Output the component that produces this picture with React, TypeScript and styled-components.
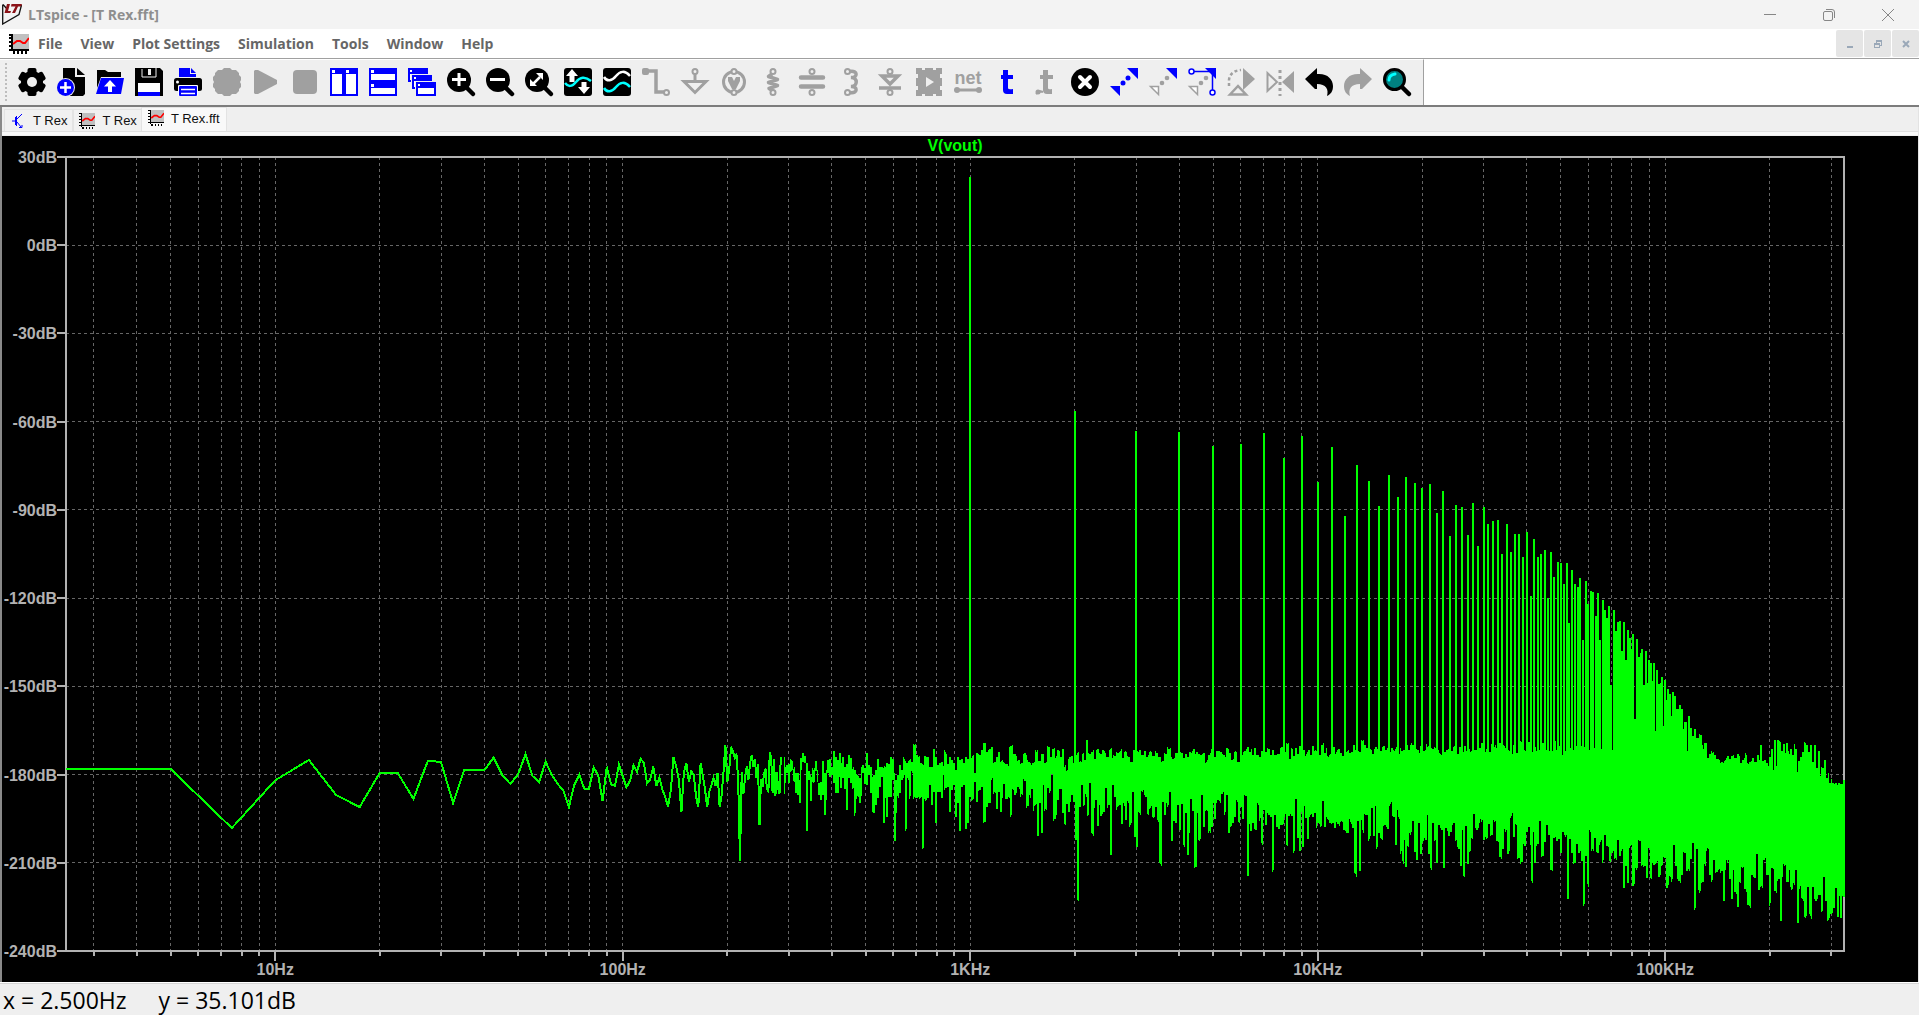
import React, { ReactNode } from "react";
import styled, { createGlobalStyle } from "styled-components";

const uiFont = `"Open Sans", "Noto Sans", sans-serif`;
const plotFont = `"Liberation Sans", Arial, sans-serif`;

const Global = createGlobalStyle`
  * { box-sizing: border-box; }
  html, body { margin: 0; }
  body { background: #efefef; font-family: ${uiFont}; }
  button { border: 0; padding: 0; margin: 0; background: none; font: inherit; color: inherit; }
`;

const Window = styled.div`
  display: flex;
  flex-direction: column;
  height: 100vh;
  min-height: 480px;
  overflow: hidden;
`;

const TitleBar = styled.header`
  display: flex;
  align-items: center;
  height: 29px;
  flex: none;
  padding: 0 21px 0 2px;
  background: #f3f3f3;
  color: #8e8e8e;
`;

const Title = styled.h1`
  flex: 1;
  margin: 0 0 0 6px;
  font-size: 14px;
  font-weight: 700;
  line-height: 28px;
`;

const CaptionButtons = styled.div`
  display: flex;
  gap: 39px;
`;

const CaptionButton = styled.button`
  display: flex;
  width: 20px;
  height: 20px;
  align-items: center;
  justify-content: center;
  color: #868686;
`;

const MenuBar = styled.nav`
  display: flex;
  align-items: center;
  height: 30px;
  flex: none;
  padding: 0 0 0 9px;
  background: #ffffff;
  border-bottom: 1px solid #a0a0a0;
  color: #666666;
`;

const Menus = styled.div`
  display: flex;
  flex: 1;
  gap: 18px;
  margin-left: 9px;
`;

const MenuButton = styled.button`
  font-size: 14px;
  font-weight: 700;
  line-height: 28px;
`;

const ChildButtons = styled.div`
  display: flex;
  gap: 1px;
`;

const ChildButton = styled.button`
  display: flex;
  width: 27px;
  height: 27px;
  align-items: center;
  justify-content: center;
  border-radius: 2px;
  background: #e5e5e5;
  color: #9aa8b8;
`;

const ToolStrip = styled.div`
  display: flex;
  height: 48px;
  flex: none;
  background: #ffffff;
  border-bottom: 2px solid #7c7c7c;
`;

const Tools = styled.div`
  display: flex;
  align-items: center;
  gap: 11px;
  padding: 0 12px 1px 5px;
  background: #efefef;
  border-top: 1px solid #ffffff;
  border-right: 1px solid #a0a0a0;
`;

const Grip = styled.span`
  width: 2px;
  height: 38px;
  background: repeating-linear-gradient(#bdbdbd 0 2px, transparent 2px 4px);
`;

const ToolButton = styled.button`
  display: block;
  width: 28px;
  height: 28px;
  color: #000000;
  &:disabled { color: #a0a0a0; }
  svg { display: block; overflow: visible; }
  text {
    font-family: ${plotFont};
    font-size: 18px;
    font-weight: 700;
  }
`;

const Document = styled.main`
  display: flex;
  flex: 1;
  min-height: 0;
  flex-direction: column;
  border-left: 2px solid #8a8a8a;
  border-right: 1px solid #e3e3e3;
`;

const Tabs = styled.div`
  display: flex;
  align-items: flex-end;
  height: 25px;
  flex: none;
  padding-left: 2px;
  border-bottom: 1px solid #dfdfdf;
`;

const Tab = styled.button<{ $active?: boolean }>`
  display: flex;
  align-items: center;
  gap: 7px;
  height: ${(p) => (p.$active ? 24 : 22)}px;
  margin-left: ${(p) => (p.$active ? -2 : 0)}px;
  padding: ${(p) => (p.$active ? "0 6px 3px 6px" : "0 5px")};
  border: 1px solid #e3e3e3;
  border-bottom: 0;
  background: ${(p) => (p.$active ? "#f9f9f9" : "#f1f1f1")};
  color: #101010;
  font-family: ${plotFont};
  font-size: 13px;
`;

const TabEdge = styled.div`
  height: 4px;
  flex: none;
  background: #f9f9f9;
  border-bottom: 1px solid #efefef;
`;

const PlotPane = styled.section`
  display: flex;
  flex: 1;
  min-height: 0;
  padding: 21px 74px 31px 64px;
  background: #000000;
`;

const PlotSvg = styled.svg`
  display: block;
  width: 100%;
  height: 100%;
  overflow: visible;
  text {
    font-family: ${plotFont};
    font-size: 16px;
    font-weight: 700;
    fill: #b2b2b2;
  }
  text.trace { fill: #00ff00; }
`;

const StatusBar = styled.footer`
  display: flex;
  gap: 32px;
  height: 33px;
  flex: none;
  padding: 1px 0 0 3px;
  background: #efefef;
  border-top: 1px solid #ffffff;
  box-shadow: inset 0 1px 0 #d5d5d5;
  color: #000000;
  font-size: 23px;
  line-height: 33px;
  white-space: pre;
`;

/* ---------- spectrum data ---------- */

const F_MIN = 2.5;
const DECADES = 5.1165;
const DB_TOP = 30;
const DB_SPAN = 270;
const W = 1778;
const H = 794;

const fx = (f: number) => Math.log10(f / F_MIN) / DECADES;
const dy = (db: number) => (DB_TOP - db) / DB_SPAN;

/* first 114 bins, 2.5 Hz apart, in thirds of a raster line below line 563 */
const lowBins = [
  147, 147, 324, 181, 120, 226, 261, 158, 158, 237, 122, 126, 249, 150, 150, 150, 113, 165, 192, 163,
  103, 168, 186, 125, 165, 192, 212, 261, 195, 164, 206, 206, 143, 166, 243, 140, 193, 198, 134, 168,
  202, 182, 135, 156, 116, 128, 190, 178, 140, 198, 172, 208, 230, 260, 212, 112, 140, 178, 277, 156,
  130, 186, 154, 164, 228, 262, 130, 168, 208, 262, 215, 196, 174, 198, 158, 260, 226, 156, 74, 186,
  150, 80, 94, 114, 104, 180, 424, 156, 222, 170, 138, 180, 130, 106, 140, 116, 174, 132, 316, 176,
  202, 160, 146, 208, 214, 96, 116, 218, 116, 228, 156, 204, 222, 110,
];

/* envelope samples as x,top,bottom: 280 Hz - 1 kHz */
const midBand =
  "730,110,222 736,142,190 740,134,160 745,132,188 750,118,155 756,122,150 762,140,185 767,158,220 773,160,225 778,180,250 781,115,150 787,100,125 793,108,130 799,128,334 805,152,180 813,170,244 819,150,190 826,122,152 831,150,185 836,190,225 841,186,240 847,122,225 853,160,284 858,150,240 862,120,160 868,116,170 874,142,165 880,92,190 886,112,218 892,120,220 897,100,170 903,128,205 908,110,175 914,140,208 920,132,270 926,104,175 933,115,190 939,140,205 945,150,280 951,165,228 958,175,250 963,142,228 968,134,160 973,145,192 980,100,196 986,135,165 991,142,218 1000,165,280 1006,150,255 1013,116,235 1019,140,200 1024,140,170 1029,145,310 1035,140,235 1040,128,292 1046,132,230 1051,110,230 1057,118,180 1062,160,364 1068,180,278 1074,165,235 1079,134,220 1086,150,180 1092,116,165 1098,128,326 1104,124,180 1110,118,228 1116,125,160 1122,74,230 1130,105,235 1137,108,238 1143,130,230 1149,135,385 1155,108,244 1162,110,235 1168,140,195 1174,140,256 1180,88,215 1186,110,308 1192,135,215 1198,128,215 1204,125,235 1209,138,165 1215,95,205 1222,132,200 1228,110,275 1235,120,210 1240,130,195 1246,150,292 1252,110,250 1258,120,334 1264,118,200 1270,130,195 1276,110,328 1283,118,308 1290,120,205 1296,108,240 1304,160,185 1310,100,246 1318,105,210 1325,90,200 1333,70,306 1340,95,262 1348,88,250 1356,80,175 1362,125,215 1370,112,268 1376,95,215";

/* noise ceiling and floor, 1 kHz - 20 kHz */
const ceilA =
  "0,1085 20,1092 33,1038 42,1062 55,1080 65,1090 73,1060 85,1085 97,1090 108,1055 117,1082 127,1062 135,1088 144,1040 152,1070 158,1047 168,1068 173,1050 182,1070 189,1046 195,1095 201,1110 207,1072 215,1068 220,1090 228,1065 234,1056 240,1082 249,1060 255,1080 261,1020 267,1062 276,1056 284,1076 291,1047 300,1062 312,1053 320,1072 330,1048 342,1068 352,1060 360,1052 367,1075 375,1054 385,1072 395,1085 403,1050 418,1050 427,1065 433,1054 440,1070 450,1053 458,1068 468,1058 475,1070 488,1084 495,1062 505,1047 518,1076 527,1058 545,1060 550,1075 557,1063 563,1072 570,1056 580,1048 590,1056 600,1066 610,1060 618,1085 625,1066 636,1050 642,1070 652,1054 662,1056 670,1066 681,1045 690,1060 696,1080 705,1054 715,1085 722,1068 733,1054 741,1042 748,1056 754,1048 758,1066 763,1045 770,1066 778,1070 785,1052 796,1056 806,1048 812,1064 818,1050 826,1066 836,1062 843,1042 850,1056 861,1032 869,1076 876,1047 881,1068 886,1045 893,1062 900,1038 910,1050 918,1062 925,1050 930,1066 938,1038 945,1050 952,1040 958,1064 965,1034 968,1029 974,1058 978,1045 984,1070 992,1062 998,1042 1008,1056 1015,1047 1022,1058 1028,1068 1036,1056 1055,1056 1060,1036 1065,1050 1080,1056 1086,1024 1093,1034 1100,1044 1110,1046 1118,1062 1125,1042 1133,1046 1140,1054 1150,1038 1157,1050 1166,1056 1175,1045 1185,1047 1197,1062";
const floorA =
  "0,1235 6,1193 11,1152 17,1198 27,1193 33,1244 39,1170 45,1185 53,1160 63,1182 73,1143 82,1217 90,1195 94,1167 99,1232 105,1215 114,1307 118,1208 123,1298 127,1156 135,1226 142,1165 150,1172 155,1122 163,1256 168,1245 173,1200 181,1167 188,1238 195,1274 199,1212 204,1235 210,1205 215,1185 220,1207 226,1320 234,1502 238,1220 245,1155 252,1214 258,1190 264,1244 269,1149 276,1301 283,1225 287,1200 291,1277 296,1215 300,1247 309,1235 317,1163 321,1223 326,1215 331,1364 337,1155 343,1190 351,1222 358,1215 363,1271 369,1209 378,1260 384,1209 390,1274 397,1176 403,1310 410,1340 417,1238 426,1176 436,1190 444,1244 450,1224 459,1253 467,1220 474,1265 480,1391 487,1206 492,1244 497,1210 501,1220 508,1176 516,1322 520,1262 526,1268 532,1215 537,1289 541,1230 545,1212 549,1335 553,1340 557,1240 561,1364 566,1298 571,1198 578,1232 586,1402 591,1240 597,1322 604,1185 612,1280 618,1230 627,1292 635,1280 639,1208 644,1256 652,1200 660,1210 665,1182 675,1235 680,1185 684,1298 690,1280 697,1270 704,1250 711,1206 717,1268 722,1222 728,1258 736,1188 741,1427 747,1271 752,1292 757,1270 765,1290 774,1215 780,1253 786,1334 791,1230 797,1274 804,1245 812,1250 819,1409 823,1245 830,1280 845,1275 855,1243 861,1337 866,1247 874,1248 882,1352 887,1198 892,1313 897,1352 901,1235 906,1340 911,1218 916,1253 921,1316 927,1250 937,1250 943,1240 948,1283 953,1270 963,1277 968,1203 972,1280 978,1250 988,1268 997,1268 1003,1283 1012,1272 1023,1262 1030,1289 1040,1298 1050,1266 1058,1285 1062,1420 1068,1430 1073,1262 1077,1412 1082,1260 1086,1290 1096,1245 1107,1316 1114,1223 1119,1307 1124,1218 1131,1340 1136,1298 1143,1316 1153,1275 1162,1288 1170,1212 1180,1250 1185,1334 1190,1230 1197,1258";

/* noise ceiling and floor, 20 kHz and up */
const ceilB =
  "0,836 5,845 20,828 25,842 33,822 38,828 44,848 52,842 57,850 63,832 72,845 84,830 90,842 105,836 112,842 120,853 130,848 140,842 147,836 154,846 162,830 173,853 178,833 183,850 190,848 194,832 200,846 215,845 223,842 232,845 238,836 243,822 252,848 260,839 268,848 277,824 285,829 290,836 297,822 305,834 315,836 323,842 333,848 340,828 350,850 356,838 364,820 372,842 380,848 387,819 392,836 398,848 404,834 410,846 418,842 428,822 436,842 445,846 452,834 457,845 462,820 470,842 478,832 485,856 492,848 502,822 512,836 520,842 530,832 540,835 550,835 560,845 575,838 590,834 605,840 617,851 640,845 662,848 700,830 740,830 780,825 820,812 862,845 880,828 893,830 901,799 906,830 911,857 917,822 922,865 929,855 936,850 943,857 952,867 965,877 975,872 983,860 990,868 995,859 1005,866 1013,854 1022,880 1028,870 1038,857 1044,883 1050,876 1057,866 1064,878 1073,857 1078,872 1082,828 1088,874 1094,870 1099,880 1105,888 1109,862 1115,839 1120,899 1124,813 1128,888 1133,813 1141,820 1144,845 1149,825 1153,850 1158,822 1162,845 1167,853 1172,839 1177,858 1182,825 1187,839 1191,906 1196,873 1202,862 1208,848 1215,822 1220,828 1225,847 1233,828 1237,876 1242,828 1246,880 1249,896 1254,845 1258,918 1263,891 1267,894 1272,871 1275,896 1279,925 1284,909 1289,938 1293,926 1298,937 1306,938 1311,944 1317,938 1324,941 1329,930";
const floorB =
  "0,1145 9,1172 12,1105 17,1182 24,1125 30,1090 38,1048 44,1138 50,1162 55,1055 60,1143 66,1112 76,1105 82,1032 86,1145 90,1185 98,1054 105,1105 110,1170 116,1060 124,1075 131,1185 137,1070 146,1093 152,1080 160,1055 168,1105 174,1130 182,1178 186,1075 192,1210 197,1062 203,1172 210,1135 216,1100 220,1028 230,1075 243,1050 250,1105 258,1100 265,1058 275,1090 282,1052 290,1108 299,1152 308,1130 315,1080 323,1143 333,1033 340,1095 348,1060 354,1155 365,1167 372,1120 380,1080 385,1065 390,1117 396,1230 400,1080 404,1170 412,1115 418,1048 427,1150 434,1110 441,1060 447,1090 453,1190 460,1098 475,1100 482,1140 488,1080 495,1095 503,1275 508,1100 514,1140 524,1170 530,1115 536,1140 545,1165 552,1290 557,1150 564,1240 570,1080 576,1130 583,1098 593,1140 600,1110 609,1163 613,1088 620,1120 630,1168 636,1140 645,1155 653,1105 657,1150 666,1130 672,1243 677,1180 684,1230 690,1122 698,1236 708,1190 718,1107 723,1180 733,1180 740,1213 745,1127 750,1213 762,1175 772,1165 776,1210 786,1175 792,1155 800,1243 810,1210 816,1218 821,1118 826,1180 836,1224 845,1205 852,1142 864,1187 872,1160 878,1112 885,1300 890,1130 897,1258 908,1225 915,1180 921,1127 928,1205 936,1220 941,1163 948,1198 965,1195 969,1282 975,1190 981,1170 988,1218 995,1275 999,1190 1005,1256 1013,1298 1020,1230 1026,1185 1033,1245 1047,1295 1055,1205 1063,1215 1070,1145 1077,1248 1086,1242 1091,1163 1100,1205 1110,1288 1115,1185 1124,1253 1135,1217 1141,1340 1146,1210 1152,1180 1162,1225 1167,1192 1173,1248 1182,1235 1186,1192 1191,1346 1196,1245 1206,1275 1218,1324 1223,1240 1230,1324 1237,1240 1247,1280 1258,1262 1266,1310 1271,1212 1277,1280 1284,1336 1292,1318 1302,1300 1307,1243 1311,1327 1315,1265 1320,1330 1325,1265 1330,1268";

/* harmonic tips of the 1 kHz tone, raster lines below the top of the plot */
const harmonics = [
  20, 254, 274, 275, 289, 287, 276, 301, 279, 325, 290, 359, 308, 324, 349, 318, 340, 320, 326, 331,
  327, 356, 334, 379, 348, 350, 378, 346, 389, 350, 367, 364, 363, 397, 367, 395, 377, 377, 400, 375,
  439, 382, 400, 397, 393, 441, 395, 420, 405, 406, 427, 406, 466, 413, 427, 430, 421, 483, 424, 447,
  434, 435, 459, 436, 483, 443, 453, 461, 449, 528, 453, 474, 465, 464, 494, 465, 503, 473, 481, 492,
  477, 562, 482, 500, 496, 492, 528, 494, 526, 503, 506, 524, 506, 574, 513, 527, 526, 520, 569, 523,
  543, 532, 537, 559, 535, 583, 539, 552, 552, 548, 573, 552, 572, 565, 565, 594, 559, 571, 571, 579,
  588, 572, 581, 581, 589, 578, 588, 588, 592, 586,
];

type Pt = number[];
const parse = (s: string): Pt[] => s.split(" ").map((p) => p.split(",").map(Number));

const toA = (p: Pt): Pt => [934 + p[0] / 3, 243 + p[1] / 3];
const toB = (p: Pt): Pt => [1334 + p[0] / 3, 303 + p[1] * 0.3443];
const mid = parse(midBand);
const ceiling: Pt[] = [
  ...mid.map((p) => [474 + p[0] / 3, 563 + p[1] / 3]),
  ...parse(ceilA).map(toA),
  ...parse(ceilB).map(toB),
];
const floor: Pt[] = [
  ...mid.map((p) => [474 + p[0] / 3, 563 + p[2] / 3]),
  ...parse(floorA).map(toA),
  ...parse(floorB).map(toB),
];

/* one value per raster column; a lone extreme is held for a second column (pen is 2 wide) */
function stepped(points: Pt[], dir: 1 | -1, spread: number, seed: number): Pt[] {
  const out: Pt[] = [];
  let s = seed;
  let k = 0;
  for (let x = Math.ceil(points[0][0]); x <= W; x++) {
    while (k < points.length - 1 && Math.abs(points[k + 1][0] - x) <= Math.abs(points[k][0] - x)) k++;
    s = (s * 16807) % 2147483647;
    const jitter = Math.abs(points[k][0] - x) > 0.7 ? (s / 2147483647 - 0.5) * spread : 0;
    out.push([x, Math.round(points[k][1] + jitter)]);
  }
  for (let i = 2; i < out.length; i++) {
    const [a, b, c] = [out[i - 2][1], out[i - 1][1], out[i][1]];
    if ((b - a) * dir > 6 && (b - c) * dir > 6) out[i++][1] = b;
  }
  return out;
}

const top = stepped(ceiling, -1, 4, 77);
const bottom = stepped(floor, 1, 6, 1234).reverse();
const noisePath =
  "M" +
  top.map(([x, y]) => `${x},${y} ${x + 1},${y}`).join("L") +
  "L" +
  bottom.map(([x, y]) => `${x + 1},${y} ${x},${y}`).join("L") +
  "Z";

const lowPath =
  "M" +
  lowBins.map((v, i) => `${(fx(F_MIN * (i + 1)) * W).toFixed(1)},${(563 + v / 3).toFixed(1)}`).join("L");

const tonePath = harmonics
  .map((y, i) => `M${Math.round(fx(1000 * (i + 1)) * W)},${y}V640`)
  .join("");

const pct = (v: number) => `${(v * 100).toFixed(3)}%`;
const decadeLabels: Record<number, string> = {
  10: "10Hz",
  100: "100Hz",
  1000: "1KHz",
  10000: "10KHz",
  100000: "100KHz",
};
const freqs: number[] = [];
for (let d = 1; d <= 100000; d *= 10)
  for (let m = 1; m < 10; m++) if (d * m > F_MIN && fx(d * m) < 1) freqs.push(d * m);
const levels = [30, 0, -30, -60, -90, -120, -150, -180, -210, -240];

function Spectrum() {
  return (
    <PlotSvg role="img" aria-label="FFT of V(vout)">
      <g stroke="#666666" strokeDasharray="3 3" shapeRendering="crispEdges">
        {freqs.map((f) => (
          <line key={f} x1={pct(fx(f))} x2={pct(fx(f))} y1="0" y2="100%" />
        ))}
        {levels.slice(1, -1).map((l) => (
          <line key={l} x1="0" x2="100%" y1={pct(dy(l))} y2={pct(dy(l))} />
        ))}
      </g>
      <g stroke="#b2b2b2" strokeWidth="2" fill="none" shapeRendering="crispEdges">
        <rect width="100%" height="100%" />
        {levels.map((l) => (
          <line key={l} x1="-9" x2="0" y1={pct(dy(l))} y2={pct(dy(l))} />
        ))}
        <svg y="100%" overflow="visible">
          {freqs.map((f) => (
            <line key={f} x1={pct(fx(f))} x2={pct(fx(f))} y1="0" y2={decadeLabels[f] ? 10 : 5} />
          ))}
        </svg>
      </g>
      {levels.map((l) => (
        <text key={l} x="-9" y={pct(dy(l))} dy="6" textAnchor="end">
          {l}dB
        </text>
      ))}
      <svg y="100%" overflow="visible">
        {freqs.filter((f) => decadeLabels[f]).map((f) => (
          <text key={f} x={pct(fx(f))} y="24" textAnchor="middle">
            {decadeLabels[f]}
          </text>
        ))}
      </svg>
      <text className="trace" x="50%" y="-6" textAnchor="middle">V(vout)</text>
      <svg width="100%" height="100%" viewBox={`0 0 ${W} ${H}`} preserveAspectRatio="none" overflow="visible">
        <g stroke="#00ff00" strokeWidth="2" fill="none" shapeRendering="crispEdges">
          <path d={lowPath} />
          <path d={tonePath} />
          <path d={noisePath} fill="#00ff00" stroke="none" />
        </g>
      </svg>
    </PlotSvg>
  );
}

/* ---------- icons ---------- */

const BLUE = "#0000ff";
const BG = "#efefef";

function WaveIcon({ size }: { size: number }) {
  return (
    <svg width={size} height={size} viewBox="0 0 20 20" shapeRendering="crispEdges">
      <rect x="4" y="0" width="16" height="16" fill="#c0c0c0" />
      <path d="M3 0V17M2 16H20M0 1H3M0 4H3M0 8H3M0 12H3M0 16H3M5 17V20M9 17V20M13 17V20M17 17V20" stroke="#000" strokeWidth="1.500" />
      <path d="M4 10L8 7H11L14 9H16L20 4" stroke="#f00" strokeWidth="2" fill="none" shapeRendering="auto" />
    </svg>
  );
}

const Transistor = () => (
  <svg width="16" height="16" viewBox="0 0 16 16" fill="none" stroke={BLUE}>
    <path d="M2 8H6M6.500 3V13M7 6L12 1M7 9L11 14M9 14.500H12V12" />
    <path d="M5.500 4V12" />
  </svg>
);

const Logo = () => (
  <svg width="20" height="21" viewBox="0 0 20 21">
    <path d="M.7.500V20L17 10.500L19.500 1M1 .5L5 5" fill="none" stroke="#111" strokeWidth="1.300" />
    <path d="M5 0H8L6 7H9L8.300 9H2.500ZM9.500 0H20L19 2.500H16L13 9H10L13.500 2.500H9Z" fill="#8b1218" />
  </svg>
);

const magnifier = (
  <>
    <circle cx="12" cy="12" r="12" />
    <path d="M18 18L26 26" stroke="currentColor" strokeWidth="4.500" strokeLinecap="round" />
  </>
);

const pin = (cx: number, cy: number) => (
  <circle cx={cx} cy={cy} r="2.500" fill={BG} stroke="currentColor" strokeWidth="2" />
);

type Tool = { name: string; off?: boolean; art: ReactNode };

const tools: Tool[] = [
  {
    name: "Settings",
    art: (
      <>
        <circle cx="14" cy="14" r="11" />
        {[0, 60, 120].map((a) => (
          <rect key={a} x="9.500" y="0" width="9" height="28" rx="2" transform={`rotate(${a} 14 14)`} />
        ))}
        <circle cx="14" cy="14" r="5" fill={BG} />
      </>
    ),
  },
  {
    name: "New schematic",
    art: (
      <>
        <path d="M6 0H18V9H28V26L26 28H6Z" />
        <path d="M20 0L28 7H20Z" />
        <circle cx="8.500" cy="19.500" r="9.500" fill={BG} />
        <circle cx="8.500" cy="19.500" r="8.500" fill={BLUE} />
        <path d="M8.500 14V25M3 19.500H14" stroke="#fff" strokeWidth="2.500" />
      </>
    ),
  },
  {
    name: "Open",
    art: (
      <>
        <path d="M1 2H9L12 4H25V9H5L1 20Z" />
        <path d="M5 10H28L25 26H0Z" fill={BLUE} />
        <path d="M14 12L20 18.500H16V24H12V18.500H8Z" fill="#fff" />
      </>
    ),
  },
  {
    name: "Save",
    art: (
      <>
        <path d="M0 0H25L28 3V28H0Z" />
        <path d="M7 1V9H21V0" fill="none" stroke={BG} />
        <path d="M13 1H16V7H13Z" fill={BG} />
        <path d="M3 15H25V24H3Z" fill="#fff" />
        <path d="M3 24H25V28H3Z" fill={BLUE} />
      </>
    ),
  },
  {
    name: "Print",
    art: (
      <>
        <path d="M5 0H16V6H22V9H5Z" fill={BLUE} />
        <path d="M17 0L22 5H17Z" fill={BLUE} />
        <rect x="0" y="10" width="28" height="13" rx="2.500" />
        <circle cx="3.500" cy="14" r="1.500" fill="#fff" />
        <rect x="4" y="17" width="20" height="11" rx="1" fill="#fff" />
        <rect x="5" y="18" width="18" height="10" rx="1" fill={BLUE} />
        <path d="M7 21.500H21M7 25.500H21" stroke="#fff" strokeWidth="1.500" />
      </>
    ),
  },
  {
    name: "Configure analysis",
    off: true,
    art: <path d="M11 0H17L19 2H23L26 5V7L28 9V12L27 14L28 16V19L26 21V23L23 26H19L17 28H11L9 26H5L2 23V21L0 19V16L1 14L0 12V9L2 7V5L5 2H9Z" />,
  },
  { name: "Run", off: true, art: <path d="M3 2H6L25 12V16L6 26H3L2 25V3Z" /> },
  { name: "Stop", off: true, art: <rect x="2" y="2" width="24" height="24" rx="4" /> },
  {
    name: "Tile vertically",
    art: (
      <g fill={BLUE} shapeRendering="crispEdges">
        <path d="M0 0H28V28H0Z" />
        <path d="M2 6H12V26H2ZM16 6H26V26H16ZM2 2H5V5H2ZM16 2H19V5H16Z" fill="#fff" />
      </g>
    ),
  },
  {
    name: "Tile horizontally",
    art: (
      <g fill={BLUE} shapeRendering="crispEdges">
        <path d="M0 0H28V28H0Z" />
        <path d="M2 6H26V12H2ZM2 20H26V26H2ZM2 2H5V5H2ZM2 16H5V19H2Z" fill="#fff" />
      </g>
    ),
  },
  {
    name: "Cascade",
    art: (
      <g fill={BLUE} shapeRendering="crispEdges">
        {[0, 7, 14].map((o, i) => (
          <g key={o}>
            <rect x={i * 4 - (i ? 1 : 0)} y={o - (i ? 1 : 0)} width="21" height="14" fill={BG} />
            <rect x={i * 4} y={o} width="20" height="14" />
            <path d={`M${i * 4 + 2} ${o + 6}H${i * 4 + 18}V${o + 12}H${i * 4 + 2}ZM${i * 4 + 2} ${o + 2}h2v2h-2z`} fill="#fff" />
          </g>
        ))}
      </g>
    ),
  },
  { name: "Zoom in", art: <>{magnifier}<path d="M12 5V18M5 11.500H19" stroke="#fff" strokeWidth="3" /></> },
  { name: "Zoom out", art: <>{magnifier}<path d="M4 11.500H19" stroke="#fff" strokeWidth="3" /></> },
  {
    name: "Zoom to fit",
    art: (
      <>
        {magnifier}
        <path d="M8 16L15 9" stroke="#fff" strokeWidth="2.500" />
        <path d="M11 5H18V12ZM5 11V18H12Z" fill="#fff" />
      </>
    ),
  },
  {
    name: "Autorange",
    art: (
      <>
        <rect width="28" height="28" rx="3" />
        <path d="M1 15C4 19 8 19 12 14S21 8 27 13" stroke="#00ffff" strokeWidth="2.500" fill="none" />
        <path d="M8 1L14 8H10.500V14H5.500V8H2ZM20 26L26 19H22.500V14H17.500V19H14Z" fill="#fff" />
      </>
    ),
  },
  {
    name: "Pick visible traces",
    art: (
      <>
        <rect width="28" height="28" rx="3" />
        <path d="M1 9C4 14 9 13 13 8S22 2 27 8" stroke="#fff" strokeWidth="2.500" fill="none" />
        <path d="M1 20C4 25 9 24 13 19S22 13 27 19" stroke="#00ffff" strokeWidth="2.500" fill="none" />
      </>
    ),
  },
  {
    name: "Wire",
    off: true,
    art: (
      <>
        <path d="M3 3H14V24H23" fill="none" stroke="currentColor" strokeWidth="3.500" />
        <rect width="7" height="7" rx="2" />
        {pin(24.5, 24.5)}
      </>
    ),
  },
  {
    name: "Ground",
    off: true,
    art: (
      <>
        <path d="M14 5V13" fill="none" stroke="currentColor" strokeWidth="3" />
        <path d="M3 13.500H25L14 24.500Z" fill="none" stroke="currentColor" strokeWidth="3" />
        {pin(14, 3.5)}
      </>
    ),
  },
  {
    name: "Voltage source",
    off: true,
    art: (
      <>
        <circle cx="14" cy="14" r="10.500" fill="none" stroke="currentColor" strokeWidth="3" />
        <path d="M8 9H12L14 13L16 9H20V13L16 21H12L8 13Z" />
        {pin(14, 3.5)}
        {pin(14, 24.5)}
      </>
    ),
  },
  {
    name: "Resistor",
    off: true,
    art: (
      <>
        <path d="M13 6L9.500 8.500L18.500 11.500L9.500 14.500L18.500 17.500L10 20.500L14 23" fill="none" stroke="currentColor" strokeWidth="3.500" strokeLinejoin="round" />
        {pin(14, 3.5)}
        {pin(14, 24.5)}
      </>
    ),
  },
  {
    name: "Capacitor",
    off: true,
    art: (
      <>
        <path d="M3 9.500H25M3 18.500H25" stroke="currentColor" strokeWidth="4.500" strokeLinecap="round" />
        {pin(14, 3.5)}
        {pin(14, 24.5)}
      </>
    ),
  },
  {
    name: "Inductor",
    off: true,
    art: (
      <>
        <path d="M13 3.500C21 2 21 10 14 9.500C21 9 21 19 14 18.500C21 18 21 26 13 24.500" fill="none" stroke="currentColor" strokeWidth="3.500" />
        {pin(10.5, 3.5)}
        {pin(10.5, 24.5)}
      </>
    ),
  },
  {
    name: "Diode",
    off: true,
    art: (
      <>
        <path d="M6 8H22L14 16ZM3 20H25" fill="none" stroke="currentColor" strokeWidth="3.500" />
        {pin(14, 3.5)}
        {pin(14, 24.5)}
      </>
    ),
  },
  {
    name: "Component",
    off: true,
    art: (
      <>
        <path d="M1 0H7V2H10V0H18V2H21V0H27V6H25V10H27V18H25V22H27V28H21V26H18V28H10V26H7V28H1V22H3V18H1V10H3V6H1Z" />
        <path d="M11 9L19 14L11 19Z" fill={BG} />
      </>
    ),
  },
  {
    name: "Net name",
    off: true,
    art: (
      <>
        <text x="14" y="16" textAnchor="middle">net</text>
        <path d="M3 22H25" stroke="currentColor" strokeWidth="3" />
        <circle cx="3" cy="22" r="3" />
        <circle cx="25" cy="22" r="3" />
      </>
    ),
  },
  { name: "Text", art: <path d="M10 2H15V7H20V11H15V20Q15 22 20 21V26H14Q10 26 10 22V11H8V7H10Z" fill={BLUE} /> },
  {
    name: "SPICE directive",
    off: true,
    art: (
      <>
        <path d="M11 2H16V7H21V11H16V20Q16 22 20 21V26H15Q11 26 11 22V11H8V7H11Z" />
        <path d="M4 26L8 23L11 24" stroke="currentColor" strokeWidth="2" />
        <circle cx="6" cy="24" r="2.500" />
      </>
    ),
  },
  {
    name: "Delete",
    art: (
      <>
        <circle cx="14" cy="14" r="14" />
        <path d="M9 9L19 19M19 9L9 19" stroke="#fff" strokeWidth="4" strokeLinecap="round" />
      </>
    ),
  },
  {
    name: "Duplicate",
    art: (
      <g fill={BLUE}>
        <path d="M17 0H28V11ZM0 18H10V28Z" />
        <circle cx="13" cy="15" r="2.500" />
        <circle cx="18" cy="10" r="2.500" />
      </g>
    ),
  },
  {
    name: "Move",
    off: true,
    art: (
      <>
        <path d="M17 0H28V11Z" fill={BLUE} />
        <path d="M1.500 18.500H9.500V26.500Z" fill="#fff" stroke="currentColor" strokeWidth="1.500" />
        <circle cx="13" cy="15" r="2.300" />
        <circle cx="18" cy="10" r="2.300" />
      </>
    ),
  },
  {
    name: "Stretch",
    off: true,
    art: (
      <>
        <path d="M17 0H28V11Z" fill={BLUE} />
        <path d="M1.500 18.500H9.500V26.500Z" fill="#fff" stroke="currentColor" strokeWidth="1.500" />
        <circle cx="13" cy="15" r="2.300" />
        <circle cx="18" cy="10" r="2.300" />
        <path d="M6 3.500H24.500V22" fill="none" stroke={BLUE} strokeWidth="1.500" />
        <circle cx="3.500" cy="3.500" r="2.500" fill="#fff" stroke={BLUE} strokeWidth="1.500" />
        <circle cx="24.500" cy="24.500" r="2.500" fill="#fff" stroke={BLUE} strokeWidth="1.500" />
      </>
    ),
  },
  {
    name: "Rotate",
    off: true,
    art: (
      <>
        <path d="M16 0L28 11L16 22Z" />
        <path d="M2 18V12Q3 3 14 2" fill="none" stroke="currentColor" strokeWidth="2.500" strokeDasharray="3 2.500" />
        <path d="M3 26.500L11 18L19 26.500Z" fill="none" stroke="currentColor" strokeWidth="2.500" />
      </>
    ),
  },
  {
    name: "Mirror",
    off: true,
    art: (
      <>
        <path d="M28 3V25L16 14Z" />
        <path d="M1.500 5V23L11 14Z" fill="none" stroke="currentColor" strokeWidth="2" />
        <path d="M14 2V28" stroke="currentColor" strokeWidth="3" strokeDasharray="3 3" />
      </>
    ),
  },
  { name: "Undo", art: <path d="M12 0V6C22 5 28 11 28 18C28 23 26 26 22 28C24 21 21 16 12 16V21H10L0 11Z" /> },
  {
    name: "Redo",
    off: true,
    art: <path d="M16 0V6C6 5 0 11 0 18C0 23 2 26 6 28C4 21 7 16 16 16V21H18L28 11Z" />,
  },
  {
    name: "Find",
    art: (
      <>
        <path d="M19 19L26 26" stroke="currentColor" strokeWidth="4.500" strokeLinecap="round" />
        <circle cx="11.500" cy="11.500" r="10" fill="#008080" stroke="currentColor" strokeWidth="3" />
        <path d="M6 12Q6 7 12 6" fill="none" stroke="#00ffff" strokeWidth="3" strokeLinecap="round" />
      </>
    ),
  },
];

const menus = ["File", "View", "Plot Settings", "Simulation", "Tools", "Window", "Help"];

export default function App() {
  return (
    <Window>
      <Global />
      <TitleBar>
        <Logo />
        <Title>LTspice - [T Rex.fft]</Title>
        <CaptionButtons>
          <CaptionButton aria-label="Minimize">
            <svg width="12" height="12" stroke="currentColor"><path d="M0 5.500H12" /></svg>
          </CaptionButton>
          <CaptionButton aria-label="Restore">
            <svg width="12" height="12" fill="none" stroke="currentColor">
              <rect x="0.500" y="2.500" width="9" height="9" rx="1.500" />
              <path d="M3 .5H9Q11.500 .5 11.500 3V9" />
            </svg>
          </CaptionButton>
          <CaptionButton aria-label="Close">
            <svg width="12" height="12" stroke="currentColor"><path d="M0 0L12 12M12 0L0 12" /></svg>
          </CaptionButton>
        </CaptionButtons>
      </TitleBar>
      <MenuBar>
        <WaveIcon size={20} />
        <Menus>
          {menus.map((m) => (
            <MenuButton key={m}>{m}</MenuButton>
          ))}
        </Menus>
        <ChildButtons>
          <ChildButton aria-label="Minimize plot">
            <svg width="8" height="8"><path d="M1 6H7V8H1Z" fill="currentColor" /></svg>
          </ChildButton>
          <ChildButton aria-label="Restore plot">
            <svg width="8" height="8" fill="none" stroke="currentColor" shapeRendering="crispEdges">
              <path d="M0 4H6M2 1H8" strokeWidth="2" />
              <path d="M.5 4V7.500H5.500V4M2.500 1V3M7.500 1V5.500H6" />
            </svg>
          </ChildButton>
          <ChildButton aria-label="Close plot">
            <svg width="8" height="8" stroke="currentColor" strokeWidth="2"><path d="M1 1L7 7M7 1L1 7" /></svg>
          </ChildButton>
        </ChildButtons>
      </MenuBar>
      <ToolStrip>
        <Tools role="toolbar">
          <Grip />
          {tools.map((t) => (
            <ToolButton key={t.name} aria-label={t.name} disabled={t.off}>
              <svg width="28" height="28" viewBox="0 0 28 28" fill="currentColor">{t.art}</svg>
            </ToolButton>
          ))}
        </Tools>
      </ToolStrip>
      <Document>
        <Tabs role="tablist">
          <Tab role="tab"><Transistor />T Rex</Tab>
          <Tab role="tab"><WaveIcon size={16} />T Rex</Tab>
          <Tab role="tab" aria-selected $active><WaveIcon size={16} />T Rex.fft</Tab>
        </Tabs>
        <TabEdge />
        <PlotPane>
          <Spectrum />
        </PlotPane>
      </Document>
      <StatusBar>
        <span>x = 2.500Hz</span>
        <span>y = 35.101dB</span>
      </StatusBar>
    </Window>
  );
}
